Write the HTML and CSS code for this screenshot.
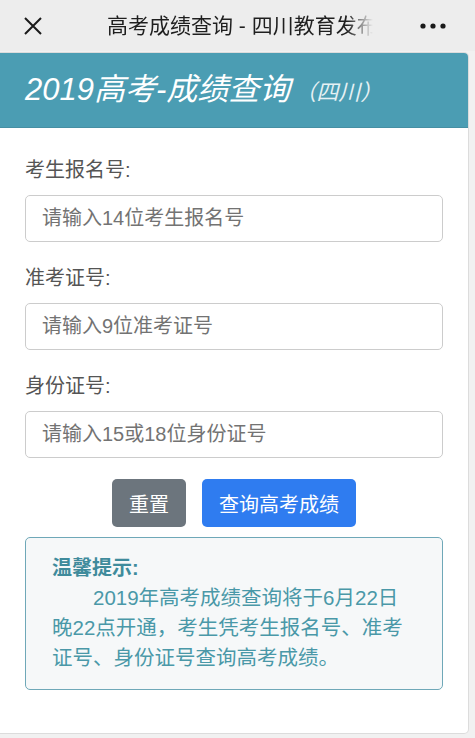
FILE: index.html
```html
<!DOCTYPE html>
<html lang="zh-CN">
<head>
    <meta charset="UTF-8">
    <meta name="viewport" content="width=device-width, initial-scale=1.0">
    <title>高考成绩查询 - 四川教育发布</title>
    <link rel="stylesheet" href="styles.css">
</head>
<body>
    <div class="topbar">
        <svg class="close" width="20" height="20" viewBox="0 0 20 20">
            <path d="M2 2 L18 18 M18 2 L2 18" stroke="#1a1a1a" stroke-width="2" fill="none"/>
        </svg>
        <div class="topbar-title">高考成绩查询 - 四川教育发布</div>
        <svg class="more" width="26" height="6" viewBox="0 0 26 6">
            <circle cx="3" cy="3" r="2.6" fill="#1a1a1a"/>
            <circle cx="13" cy="3" r="2.6" fill="#1a1a1a"/>
            <circle cx="23" cy="3" r="2.6" fill="#1a1a1a"/>
        </svg>
    </div>

    <div class="card">
        <div class="card-header">
            <h1>2019高考-成绩查询<small>（四川）</small></h1>
        </div>
        <form class="card-body" id="queryForm">
            <label for="ksh">考生报名号:</label>
            <input type="text" id="ksh" name="ksh" placeholder="请输入14位考生报名号">

            <label for="zkzh">准考证号:</label>
            <input type="text" id="zkzh" name="zkzh" placeholder="请输入9位准考证号">

            <label for="sfzh">身份证号:</label>
            <input type="text" id="sfzh" name="sfzh" placeholder="请输入15或18位身份证号">

            <div class="actions">
                <button type="reset" class="btn btn-gray">重置</button>
                <button type="button" class="btn btn-blue">查询高考成绩</button>
            </div>

            <div class="notice">
                <h2>温馨提示:</h2>
                <p>2019年高考成绩查询将于6月22日<br>晚22点开通，考生凭考生报名号、准考<br>证号、身份证号查询高考成绩。</p>
            </div>
        </form>
    </div>
</body>
</html>
```
FILE: styles.css
```css
/* 页面基础样式 */
body {
    margin: 0;
    background-color: #f1f1f1;
    font-family: "Liberation Sans", "Noto Sans CJK SC", sans-serif;
    color: #555;
}

/* 顶部导航栏 */
.topbar {
    height: 51px;
    background-color: #ededed;
    display: flex;
    align-items: center;
}
.close {
    margin-left: 23px;
}
.topbar-title {
    margin-left: 64px;
    width: 266px;
    font-size: 21px;
    line-height: 30px;
    color: #1f1f1f;
    white-space: nowrap;
    overflow: hidden;
    -webkit-mask-image: linear-gradient(to right, #000 240px, transparent 266px);
    mask-image: linear-gradient(to right, #000 240px, transparent 266px);
}
.more {
    margin-left: auto;
    margin-right: 29px;
}

/* 卡片 */
.card {
    width: 468px;
    height: 680px;
    margin-top: 1px;
    background: #fff;
    border: 1px solid #dcdcdc;
    border-left: none;
    border-radius: 0 5px 5px 0;
    overflow: hidden;
}
.card-header {
    height: 66px;
    background-color: #4b9db3;
    border-bottom: 1px solid #468fa3;
    display: flex;
    align-items: center;
    padding: 0 0 8px 25px;
}
h1 {
    margin: 0;
    font-size: 31px;
    font-weight: normal;
    font-style: italic;
    color: #fff;
}
h1 small {
    font-size: 22px;
    color: #e6f1f4;
    margin-left: 4px;
}

.card-body {
    padding: 29px 25px 0 25px;
    display: flex;
    flex-direction: column;
}
label {
    font-size: 20px;
    line-height: 26px;
    margin-bottom: 12px;
    color: #555;
}
input {
    height: 47px;
    box-sizing: border-box;
    padding: 0 16px;
    margin-bottom: 23px;
    border: 1px solid #ccc;
    border-radius: 5px;
    font-family: inherit;
    font-size: 20px;
    color: #555;
}
input::placeholder {
    color: #737373;
}
input:last-of-type {
    margin-bottom: 21px;
}

/* 按钮 */
.actions {
    display: flex;
    justify-content: center;
    gap: 16px;
}
.btn {
    height: 48px;
    padding: 0 17px;
    border: none;
    border-radius: 5px;
    font-family: inherit;
    font-size: 20px;
    color: #fff;
    cursor: pointer;
}
.btn-gray {
    background-color: #6c757d;
}
.btn-blue {
    background-color: #2f7cf0;
}

/* 温馨提示 */
.notice {
    margin-top: 10px;
    height: 153px;
    box-sizing: border-box;
    padding: 15px 10px 0 26px;
    background-color: #f6f8f9;
    border: 1px solid #6fa8b8;
    border-radius: 5px;
    color: #4a98a8;
}
.notice h2 {
    margin: 0;
    font-size: 20px;
    line-height: 30px;
    font-weight: bold;
    color: #3f8b9c;
}
.notice p {
    margin: 0;
    font-size: 20.5px;
    line-height: 30px;
    text-indent: 41px;
    white-space: nowrap;
}
```
